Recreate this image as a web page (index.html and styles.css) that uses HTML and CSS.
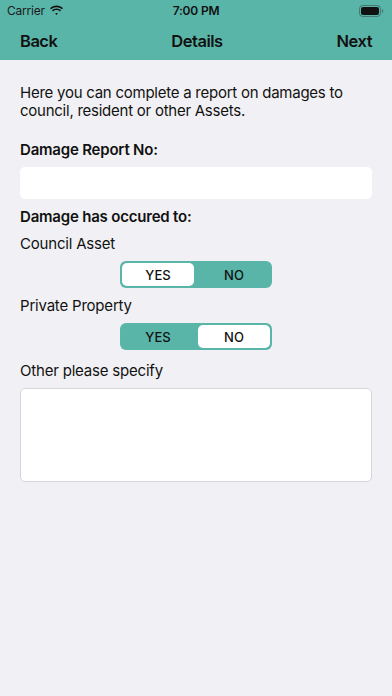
FILE: index.html
```html
<!DOCTYPE html>
<html>
<head>
<meta charset="utf-8">
<link rel="stylesheet" href="styles.css">
</head>
<body>
<div class="header">
  <div class="status">
    <div class="status-left">Carrier
      <svg class="wifi" width="15" height="11" viewBox="0 0 15 11"><path d="M7.5 2.2c2.1 0 4 .8 5.4 2.1l1.1-1.1C12.3 1.6 10 .6 7.5.6S2.7 1.6 1 3.2l1.1 1.1C3.5 3 5.4 2.2 7.5 2.2z M7.5 5.1c1.3 0 2.5.5 3.4 1.3L12 5.3C10.8 4.2 9.2 3.5 7.5 3.5S4.2 4.2 3 5.3l1.1 1.1C5 5.6 6.2 5.1 7.5 5.1z M7.5 8c.5 0 1 .2 1.4.5L7.5 10 6.1 8.5C6.5 8.2 7 8 7.5 8z" fill="#111"/></svg>
    </div>
    <div class="status-time">7:00 PM</div>
    <div class="status-right">
      <svg width="25" height="12" viewBox="0 0 25 12"><rect x="0.5" y="0.5" width="21" height="11" rx="3.2" fill="none" stroke="#222" stroke-opacity="0.4"/><rect x="2" y="2" width="18" height="8" rx="2" fill="#111"/><path d="M23 4v4c.8-.3 1.3-1.1 1.3-2S23.8 4.3 23 4z" fill="#222" fill-opacity="0.4"/></svg>
    </div>
  </div>
  <div class="nav">
    <span class="nav-btn">Back</span>
    <span class="nav-title">Details</span>
    <span class="nav-btn">Next</span>
  </div>
</div>
<div class="content">
  <p class="intro">Here you can complete a report on damages to council, resident or other Assets.</p>
  <div class="label bold label-report">Damage Report No:</div>
  <div class="input"></div>
  <div class="label bold label-occured">Damage has occured to:</div>
  <div class="label label-council">Council Asset</div>
  <div class="seg-row">
    <div class="seg">
      <div class="seg-item selected">YES</div>
      <div class="seg-item">NO</div>
    </div>
  </div>
  <div class="label label-private">Private Property</div>
  <div class="seg-row">
    <div class="seg">
      <div class="seg-item">YES</div>
      <div class="seg-item selected">NO</div>
    </div>
  </div>
  <div class="label label-other">Other please specify</div>
  <div class="textarea"></div>
</div>
</body>
</html>
```
FILE: styles.css
```css
* { box-sizing: border-box; }
html, body { margin: 0; padding: 0; }
body {
  width: 392px;
  height: 696px;
  background: #f1f1f5;
  font-family: Inter, "Noto Sans", sans-serif;
  color: #111;
  overflow: hidden;
}
.header {
  background: #5ab5a9;
  height: 60px;
}
.status {
  height: 21px;
  display: flex;
  align-items: center;
  justify-content: space-between;
  padding: 0 7px;
  font-size: 12px;
  letter-spacing: -0.2px;
}
.status-left { display: flex; align-items: center; gap: 4px; color: #1a1a1a; width: 80px; }
.status-time { font-weight: 600; font-size: 12px; }
.status-right { width: 80px; display: flex; justify-content: flex-end; padding-right: 1px; }
.nav {
  height: 39px;
  display: flex;
  align-items: center;
  justify-content: space-between;
  padding: 0 20px 0 20px;
  font-size: 16.5px;
  letter-spacing: -0.5px;
  font-weight: 600;
  color: #111;
}
.content {
  padding: 24px 20px 0 20px;
}
.intro {
  margin: 0;
  font-size: 15px;
  line-height: 18px;
  letter-spacing: -0.25px;
  color: #111;
}
.label {
  font-size: 15px;
  line-height: 19px;
  letter-spacing: -0.2px;
}
.bold { font-weight: 600; }
.label-report { margin-top: 20px; }
.input {
  margin-top: 8px;
  height: 32px;
  background: #fff;
  border-radius: 5px;
}
.label-occured { margin-top: 8px; }
.label-council { margin-top: 8px; }
.seg-row {
  display: flex;
  justify-content: center;
  margin-top: 8px;
}
.seg {
  width: 152px;
  height: 27px;
  background: #5ab5a9;
  border-radius: 6px;
  padding: 2px;
  display: grid;
  grid-template-columns: 1fr 1fr;
  gap: 4px;
}
.seg-item {
  display: flex;
  align-items: center;
  justify-content: center;
  font-size: 13px;
  font-weight: 500;
  color: #111;
  border-radius: 5px;
}
.seg-item.selected { background: #fff; }
.label-private { margin-top: 8px; }
.label-other { margin-top: 11px; }
.textarea {
  margin-top: 8px;
  height: 94px;
  background: #fff;
  border: 1px solid #d6d6da;
  border-radius: 5px;
}
```
